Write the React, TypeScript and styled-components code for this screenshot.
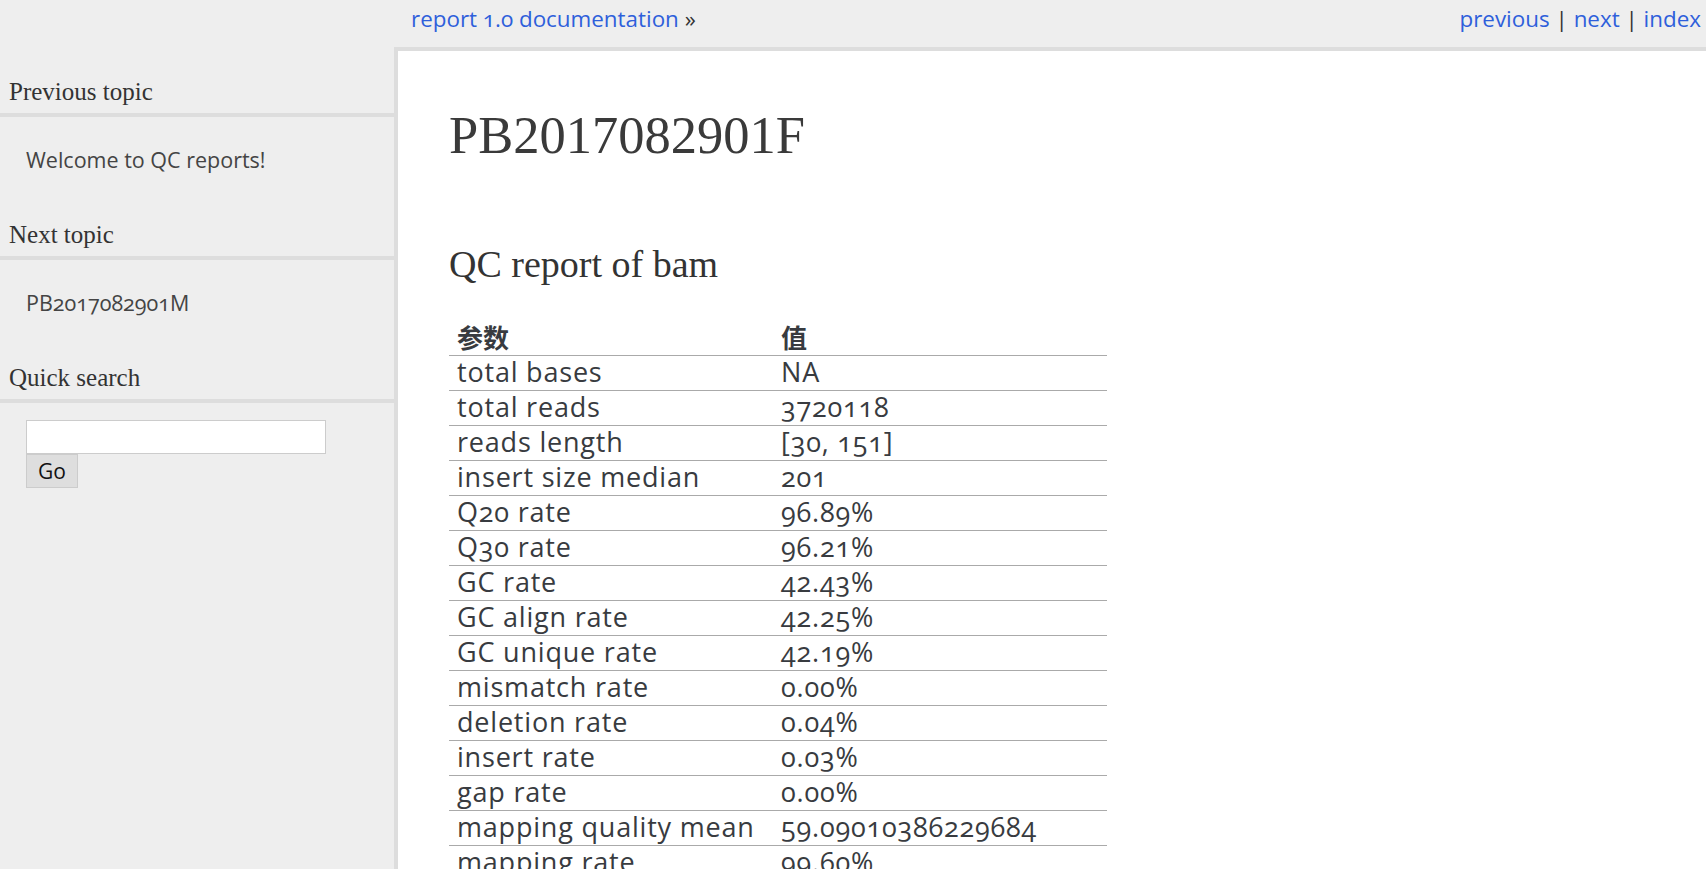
import React from "react";
import styled, { createGlobalStyle } from "styled-components";

const Global = createGlobalStyle`
  html, body { margin: 0; padding: 0; background: #eeeeee; }
  body { font-family: "Open Sans", "Noto Sans", sans-serif; color: #3b3e44; }
  * { box-sizing: border-box; }
`;

const Page = styled.div`
  display: flex;
  flex-direction: column;
  min-height: 100vh;
  background: #eeeeee;
`;

const TopBar = styled.div`
  display: flex;
  align-items: flex-start;
  justify-content: space-between;
  height: 47px;
  padding: 3.5px 5px 0 411px;
  font-family: "Open Sans", sans-serif;
  font-size: 22.4px;
  line-height: 30px;
  font-variant-numeric: oldstyle-nums;
  color: #333;
`;

const NavLink = styled.a`
  color: #2e5fdb;
  text-decoration: none;
`;

const Sep = styled.span`
  color: #333;
`;

const Body = styled.div`
  display: flex;
  flex: 1;
`;

const Sidebar = styled.aside`
  width: 394px;
  flex: none;
  padding-top: 29px;
  background: #eeeeee;
`;

const SideHeading = styled.h3`
  margin: 44px 0 0;
  padding: 0 0 6px 9px;
  font-family: "Liberation Serif", "Times New Roman", serif;
  font-weight: normal;
  font-size: 25px;
  line-height: 31px;
  color: #333;
  border-bottom: 4px solid #dddddd;
  &:first-child { margin-top: 0; }
`;

const SideList = styled.ul`
  list-style: none;
  margin: 0;
  padding: 28px 0 0 26px;
`;

const SideItem = styled.li`
  font-family: "Open Sans", sans-serif;
  font-size: 21.5px;
  line-height: 30px;
  font-variant-numeric: oldstyle-nums;
`;

const SideLink = styled.a`
  color: #444;
  text-decoration: none;
`;

const SearchForm = styled.form`
  display: flex;
  flex-direction: column;
  align-items: flex-start;
  padding: 17px 0 0 26px;
`;

const SearchInput = styled.input`
  width: 300px;
  height: 34px;
  margin: 0;
  border: 1.5px solid #cccccc;
  background: #fff;
  font-size: 18px;
`;

const GoButton = styled.button`
  width: 52px;
  height: 34px;
  margin: 0;
  padding: 0;
  border: 1.5px solid #cccccc;
  background: #dedede;
  color: #111;
  font-family: "Open Sans", sans-serif;
  font-size: 21px;
`;

const Content = styled.main`
  flex: 1;
  background: #ffffff;
  border-left: 4px solid #dddddd;
  border-top: 4px solid #dddddd;
  padding: 0 0 40px 51px;
  min-width: 0;
`;

const H1 = styled.h1`
  margin: 53px 0 0;
  font-family: "Liberation Serif", "Times New Roman", serif;
  font-weight: normal;
  font-size: 52.5px;
  line-height: 62px;
  color: #3a3a3a;
`;

const H2 = styled.h2`
  margin: 76px 0 0;
  font-family: "Liberation Serif", "Times New Roman", serif;
  font-weight: normal;
  font-size: 38px;
  line-height: 44px;
  color: #333;
`;

const Table = styled.table`
  margin-top: 35px;
  width: 658px;
  border-collapse: collapse;
  font-family: "Open Sans", sans-serif;
  font-size: 27px;
  letter-spacing: 0.8px;
  line-height: 32px;
  font-variant-numeric: oldstyle-nums;
  color: #383b40;
`;

const Th = styled.th<{ $w?: number }>`
  text-align: left;
  padding: 0 8px 3px;
  line-height: 31px;
  font-family: "Noto Sans CJK SC", "Open Sans", sans-serif;
  font-weight: bold;
  font-size: 26px;
  letter-spacing: 0;
  border-bottom: 1px solid #aaaaaa;
  width: ${(p) => (p.$w ? `${p.$w}px` : "auto")};
`;

const Td = styled.td`
  padding: 0 8px 2px;
  border-bottom: 1px solid #aaaaaa;
  white-space: nowrap;
`;

const rows: [string, string][] = [
  ["total bases", "NA"],
  ["total reads", "3720118"],
  ["reads length", "[30, 151]"],
  ["insert size median", "201"],
  ["Q20 rate", "96.89%"],
  ["Q30 rate", "96.21%"],
  ["GC rate", "42.43%"],
  ["GC align rate", "42.25%"],
  ["GC unique rate", "42.19%"],
  ["mismatch rate", "0.00%"],
  ["deletion rate", "0.04%"],
  ["insert rate", "0.03%"],
  ["gap rate", "0.00%"],
  ["mapping quality mean", "59.09010386229684"],
  ["mapping rate", "99.60%"],
];

export default function App() {
  return (
    <Page>
      <Global />
      <TopBar>
        <div>
          <NavLink href="#">report 1.0 documentation</NavLink> <Sep>»</Sep>
        </div>
        <div>
          <NavLink href="#">previous</NavLink> <Sep>|</Sep>{" "}
          <NavLink href="#">next</NavLink> <Sep>|</Sep>{" "}
          <NavLink href="#">index</NavLink>
        </div>
      </TopBar>
      <Body>
        <Sidebar>
          <SideHeading>Previous topic</SideHeading>
          <SideList>
            <SideItem>
              <SideLink href="#">Welcome to QC reports!</SideLink>
            </SideItem>
          </SideList>
          <SideHeading>Next topic</SideHeading>
          <SideList>
            <SideItem>
              <SideLink href="#">PB2017082901M</SideLink>
            </SideItem>
          </SideList>
          <SideHeading>Quick search</SideHeading>
          <SearchForm onSubmit={(e) => e.preventDefault()}>
            <SearchInput type="text" />
            <GoButton type="submit">Go</GoButton>
          </SearchForm>
        </Sidebar>
        <Content>
          <H1>PB2017082901F</H1>
          <H2>QC report of bam</H2>
          <Table>
            <thead>
              <tr>
                <Th $w={324}>参数</Th>
                <Th>值</Th>
              </tr>
            </thead>
            <tbody>
              {rows.map(([k, v]) => (
                <tr key={k}>
                  <Td>{k}</Td>
                  <Td>{v}</Td>
                </tr>
              ))}
            </tbody>
          </Table>
        </Content>
      </Body>
    </Page>
  );
}
